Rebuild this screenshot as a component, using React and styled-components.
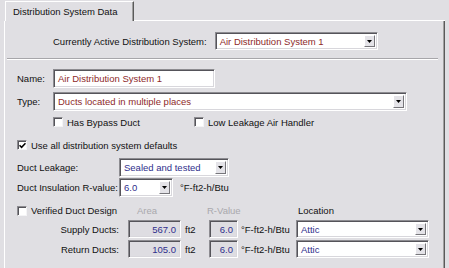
import React from 'react';
import styled, { createGlobalStyle } from 'styled-components';

const Global = createGlobalStyle`
  html, body { margin: 0; padding: 0; background: #e0dfe3; }
  body {
    font-family: "Liberation Sans", Arial, sans-serif;
    font-size: 9.5px;
    color: #111111;
    width: 449px;
    height: 268px;
    overflow: hidden;
  }
  * { box-sizing: border-box; }
`;

const Frame = styled.div`
  width: 449px;
  height: 268px;
  padding-left: 4px;
  display: flex;
  flex-direction: column;
`;

const TabRow = styled.div`
  display: flex;
  align-items: flex-end;
  height: 21px;
  width: 441px;
`;

const Tab = styled.div`
  width: 129px;
  height: 20px;
  margin-left: 1px;
  border-top: 1px solid #ffffff;
  border-left: 1px solid #ffffff;
  border-right: 1px solid #5a5a5a;
  box-shadow: inset -1px 0 0 #a0a0a0;
  padding-left: 7px;
  display: flex;
  align-items: center;
  line-height: 1;
`;

const TabFill = styled.div`
  flex: 1;
  height: 1px;
  background: #ffffff;
`;

const Panel = styled.div`
  width: 441px;
  flex: 1;
  border-left: 1px solid #ffffff;
  border-right: 1px solid #5a5a5a;
  box-shadow: inset -1px 0 0 #a0a0a0;
  display: flex;
  flex-direction: column;
`;

const Row = styled.div`
  display: flex;
  align-items: center;
  height: ${p => p.$h || 19}px;
  margin-top: ${p => p.$mt || 0}px;
  padding-left: ${p => p.$pl || 0}px;
  gap: ${p => p.$gap || 0}px;
`;

const Label = styled.span`
  display: inline-block;
  width: ${p => (p.$w ? `${p.$w}px` : 'auto')};
  flex: none;
  white-space: nowrap;
  color: ${p => (p.$dim ? '#a9a8ad' : '#111111')};
  text-align: ${p => (p.$right ? 'right' : 'left')};
  padding-right: ${p => p.$pr || 0}px;
  padding-left: ${p => p.$pl || 0}px;
  margin-left: ${p => p.$ml || 0}px;
`;

const Divider = styled.div`
  height: 2px;
  margin: ${p => p.$mt || 0}px 6px 0 2px;
  border-top: 1px solid #a7a6aa;
  border-bottom: 1px solid #ffffff;
`;

const Sunken = styled.div`
  flex: none;
  width: ${p => p.$w}px;
  height: ${p => p.$h || 19}px;
  border-top: 1px solid #8d8c91;
  border-left: 1px solid #8d8c91;
  border-bottom: 1px solid #ffffff;
  border-right: 1px solid #ffffff;
  box-shadow: inset 1px 1px 0 #55545a, inset -1px -1px 0 #d8d7dc;
  background: ${p => (p.$ro ? '#dedde2' : '#ffffff')};
  display: flex;
  align-items: center;
  justify-content: ${p => (p.$right ? 'flex-end' : 'flex-start')};
  padding: 0 ${p => (p.$right ? 4 : 0)}px 0 ${p => (p.$right ? 0 : 4)}px;
  color: ${p => p.$color || '#111111'};
  white-space: nowrap;
  overflow: hidden;
`;

const ComboBox = styled(Sunken)`
  padding: 2px 2px 2px 4px;
  justify-content: space-between;
`;

const ComboText = styled.span`
  white-space: nowrap;
`;

const DropButton = styled.span`
  flex: none;
  width: 11px;
  height: 100%;
  background: #e4e3e8;
  border-top: 1px solid #ffffff;
  border-left: 1px solid #ffffff;
  border-right: 1px solid #77767b;
  border-bottom: 1px solid #77767b;
  display: flex;
  align-items: center;
  justify-content: center;
`;

const CheckBox = styled.span`
  flex: none;
  width: 10px;
  height: 10px;
  background: #ffffff;
  border-top: 1px solid #8d8c91;
  border-left: 1px solid #8d8c91;
  border-bottom: 1px solid #f4f4f6;
  border-right: 1px solid #f4f4f6;
  box-shadow: inset 1px 1px 0 #55545a;
  display: flex;
  align-items: center;
  justify-content: center;
`;

const CheckItem = styled.label`
  display: flex;
  align-items: center;
  gap: 4px;
  width: ${p => (p.$w ? `${p.$w}px` : 'auto')};
  flex: none;
  white-space: nowrap;
`;

const DuctGrid = styled.div`
  display: grid;
  grid-template-columns: 111px 53px 28px 29px 58px 133px;
  grid-template-rows: 15px 18px 18px;
  row-gap: 2px;
  align-items: center;
  padding-left: 12px;
  margin-top: ${p => p.$mt || 0}px;
`;

const Unit = styled.span`
  white-space: nowrap;
  padding-left: ${p => p.$pl || 0}px;
`;

const Arrow = () => (
  <svg width="5" height="3" viewBox="0 0 5 3">
    <path d="M0 0h5L2.5 3z" fill="#000" />
  </svg>
);

const Check = () => (
  <svg width="7" height="7" viewBox="0 0 7 7">
    <path d="M0.5 3.2 L2.6 5.3 L6.5 1.2" stroke="#000" strokeWidth="1.6" fill="none" />
  </svg>
);

const Combo = ({ w, h, color, children }) => (
  <ComboBox $w={w} $h={h} $color={color}>
    <ComboText>{children}</ComboText>
    <DropButton><Arrow /></DropButton>
  </ComboBox>
);

const Checkbox = ({ checked, w, children }) => (
  <CheckItem $w={w}>
    <CheckBox>{checked && <Check />}</CheckBox>
    <span>{children}</span>
  </CheckItem>
);

const RED = '#8e2a2a';
const BLUE = '#2f2f8c';

export default function App() {
  return (
    <>
      <Global />
      <Frame>
        <TabRow>
          <Tab>Distribution System Data</Tab>
          <TabFill />
        </TabRow>
        <Panel>
          <Row $mt={11} $h={18} $pl={48} $gap={8}>
            <Label>Currently Active Distribution System:</Label>
            <Combo w={163} h={18} color={RED}>Air Distribution System 1</Combo>
          </Row>
          <Divider $mt={8} />
          <Row $mt={9} $pl={12}>
            <Label $w={36}>Name:</Label>
            <Sunken $w={162} $color={RED}>Air Distribution System 1</Sunken>
          </Row>
          <Row $mt={4} $pl={12}>
            <Label $w={36}>Type:</Label>
            <Combo w={354} color={RED}>Ducts located in multiple places</Combo>
          </Row>
          <Row $mt={4} $h={14} $pl={48}>
            <Checkbox w={141}>Has Bypass Duct</Checkbox>
            <Checkbox>Low Leakage Air Handler</Checkbox>
          </Row>
          <Row $mt={9} $h={14} $pl={12}>
            <Checkbox checked>Use all distribution system defaults</Checkbox>
          </Row>
          <Row $mt={6} $pl={12}>
            <Label $w={102}>Duct Leakage:</Label>
            <Combo w={110} color={BLUE}>Sealed and tested</Combo>
          </Row>
          <Row $mt={1} $pl={12} $gap={0}>
            <Label $w={102}>Duct Insulation R-value:</Label>
            <Combo w={54} color={BLUE}>6.0</Combo>
            <Unit $pl={7}>°F-ft2-h/Btu</Unit>
          </Row>
          <DuctGrid $mt={6}>
            <Checkbox>Verified Duct Design</Checkbox>
            <Label $dim $pl={9}>Area</Label>
            <span />
            <Label $dim $ml={-2}>R-Value</Label>
            <span />
            <Label $pl={2}>Location</Label>

            <Label $right $pr={9}>Supply Ducts:</Label>
            <Sunken $w={53} $h={18} $ro $right $color={BLUE}>567.0</Sunken>
            <Unit $pl={4}>ft2</Unit>
            <Sunken $w={29} $h={18} $ro $right $color={BLUE}>6.0</Sunken>
            <Unit $pl={3}>°F-ft2-h/Btu</Unit>
            <Combo w={133} h={18} color={BLUE}>Attic</Combo>

            <Label $right $pr={9}>Return Ducts:</Label>
            <Sunken $w={53} $h={18} $ro $right $color={BLUE}>105.0</Sunken>
            <Unit $pl={4}>ft2</Unit>
            <Sunken $w={29} $h={18} $ro $right $color={BLUE}>6.0</Sunken>
            <Unit $pl={3}>°F-ft2-h/Btu</Unit>
            <Combo w={133} h={18} color={BLUE}>Attic</Combo>
          </DuctGrid>
        </Panel>
      </Frame>
    </>
  );
}
